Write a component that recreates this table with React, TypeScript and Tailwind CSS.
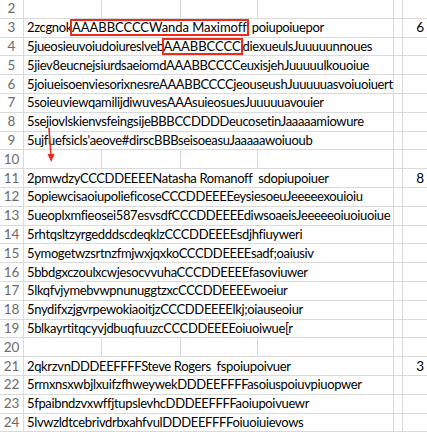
import React from 'react';

type Row = {
  n: number;
  pre?: string;
  box?: string;
  post?: string;
  num?: string;
};

const rows: Row[] = [
  { n: 2 },
  { n: 3, pre: '2zcgnok', box: 'AAABBCCCCWanda Maximoff', post: ' poiupoiuepor', num: '6' },
  { n: 4, pre: '5jueosieuvoiudoiureslveb', box: 'AAABBCCCC', post: 'diexueulsJuuuuunnoues' },
  { n: 5, pre: '5jiev8eucnejsiurdsaeiomdAAABBCCCCeuxisjehJuuuuulkouoiue' },
  { n: 6, pre: '5joiueisoenviesorixnesreAAABBCCCCjeouseushJuuuuuasvoiuoiuert' },
  { n: 7, pre: '5soieuviewqamilijdiwuvesAAAsuieosuesJuuuuuavouier' },
  { n: 8, pre: '5sejiovlskienvsfeingsijeBBBCCDDDDeucosetinJaaaaamiowure' },
  { n: 9, pre: "5ujfuefsicls'aeove#dirscBBBseisoeasuJaaaaawoiuoub" },
  { n: 10 },
  { n: 11, pre: '2pmwdzyCCCDDEEEENatasha Romanoff  sdopiupoiuer', num: '8' },
  { n: 12, pre: '5opiewcisaoiupolieficoseCCCDDEEEEeysiesoeuJeeeeexouioiu' },
  { n: 13, pre: '5ueoplxmfieosei587esvsdfCCCDDEEEEdiwsoaeisJeeeeeoiuoiuoiue' },
  { n: 14, pre: '5rhtqsltzyrgedddscdeqklzCCCDDEEEEsdjhfiuyweri' },
  { n: 15, pre: '5ymogetwzsrtnzfmjwxjqxkoCCCDDEEEEsadf;oaiusiv' },
  { n: 16, pre: '5bbdgxczoulxcwjesocvvuhaCCCDDEEEEfasoviuwer' },
  { n: 17, pre: '5lkqfvjymebvwpnunuggtzxcCCCDDEEEEwoeiur' },
  { n: 18, pre: '5nydifxzjgvrpewokiaoitjzCCCDDEEEElkj;oiauseoiur' },
  { n: 19, pre: '5blkayrtitqcyvjdbuqfuuzcCCCDDEEEEoiuoiwue[r' },
  { n: 20 },
  { n: 21, pre: '2qkrzvnDDDEEFFFFSteve Rogers  fspoiupoivuer', num: '3' },
  { n: 22, pre: '5rmxnsxwbjlxuifzfhweywekDDDEEFFFFasoiuspoiuvpiuopwer' },
  { n: 23, pre: '5fpaibndzvxwffjtupslevhcDDDEEFFFFaoiupoivuewr' },
  { n: 24, pre: '5lvwzldtcebrivdrbxahfvulDDDEEFFFFoiuoiuievows' },
];

const line = 'border-[#dadada]';

function SheetRow({ row }: { row: Row }) {
  return (
    <div className={`flex h-[18.8px] border-b ${line}`}>
      <div className={`w-[24px] shrink-0 border-r ${line} flex items-center justify-center text-[13.5px] tracking-normal text-[#6b6b6b]`}>
        {row.n}
      </div>
      <div className={`w-[78px] shrink-0 border-r ${line}`}>
        {row.pre && (
          <span className="relative z-10 flex h-full w-max items-center whitespace-pre bg-white pl-[3px]">
            {row.pre}
            {row.box && (
              <span className="-ml-[2px] inline-block h-[17px] border-2 border-[#ec2b1f] leading-[13px] tracking-[-0.05px]">
                {row.box}
              </span>
            )}
            {row.post}
          </span>
        )}
      </div>
      <div className={`w-[79px] shrink-0 border-r ${line}`} />
      <div className={`w-[77px] shrink-0 border-r ${line}`} />
      <div className={`w-[136px] shrink-0 border-r ${line}`} />
      <div className={`w-[9px] shrink-0 border-r ${line}`} />
      <div className="flex w-[24px] shrink-0 items-center justify-end pr-[3px] text-[13.5px] tracking-normal">{row.num}</div>
    </div>
  );
}

export default function App() {
  return (
    <div className="relative h-[434px] w-[427px] overflow-hidden bg-white font-['Lato',sans-serif] text-[13px] leading-[17px] tracking-[-0.35px] text-black">
      {rows.map((r) => (
        <SheetRow key={r.n} row={r} />
      ))}
      <svg className="absolute left-[42px] top-[124px] z-20" width="16" height="42" viewBox="0 0 16 42">
        <line x1="7" y1="4" x2="9" y2="32" stroke="#ec2b1f" strokeWidth="1.6" />
        <polygon points="5.5,30 12.5,30 9.2,38" fill="#ec2b1f" />
      </svg>
    </div>
  );
}
